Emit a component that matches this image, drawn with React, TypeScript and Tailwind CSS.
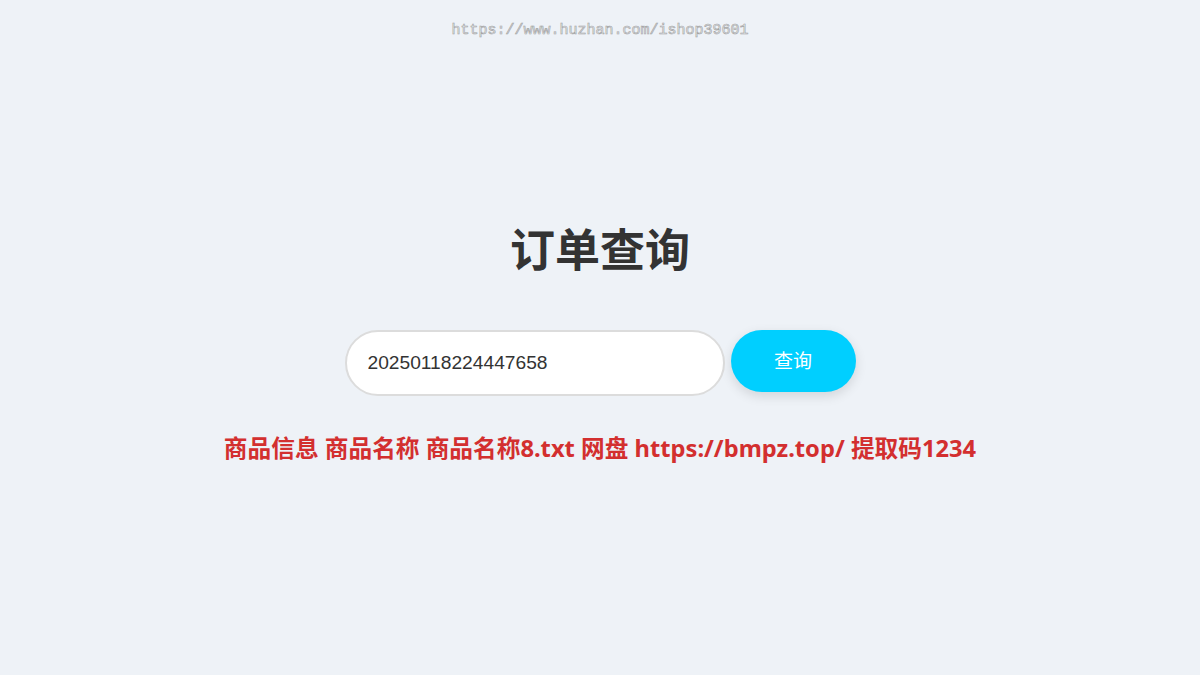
import { useState } from 'react';

export default function App() {
  const [orderNo, setOrderNo] = useState('20250118224447658');

  return (
    <div className="relative flex min-h-screen flex-col items-center justify-center bg-[#eef2f7] pt-[11px] font-['Liberation_Sans','Noto_Sans_CJK_SC',sans-serif]">
      {/* 水印 */}
      <div className="absolute left-0 right-0 top-[19px] text-center font-['Liberation_Mono',monospace] text-[15px] leading-[24px] text-transparent [-webkit-text-stroke:0.6px_#a0a0a0]">
        https://www.huzhan.com/ishop39601
      </div>

      <h1 className="mb-[56px] font-['Noto_Sans_CJK_SC',sans-serif] text-[45px] font-bold leading-[53px] text-[#333]">
        订单查询
      </h1>

      <form
        className="flex items-start gap-[6px]"
        onSubmit={(e) => e.preventDefault()}
      >
        <input
          value={orderNo}
          onChange={(e) => setOrderNo(e.target.value)}
          className="h-[66px] w-[380px] rounded-full border-2 border-[#dcdcdc] bg-white pl-[21px] pr-5 font-['Liberation_Sans',sans-serif] text-[19.2px] text-[#333] outline-none"
        />
        <button
          type="submit"
          className="h-[62px] w-[125px] rounded-full bg-[#00cfff] font-['Noto_Sans_CJK_SC',sans-serif] text-[19px] text-white shadow-[0_4px_12px_rgba(0,0,0,0.12)]"
        >
          查询
        </button>
      </form>

      <p className="mt-[34px] font-['Noto_Sans','Noto_Sans_CJK_SC',sans-serif] text-[23.7px] font-bold leading-[36px] text-[#d32f2f]">
        商品信息 商品名称 商品名称8.txt 网盘 https://bmpz.top/ 提取码1234
      </p>
    </div>
  );
}
